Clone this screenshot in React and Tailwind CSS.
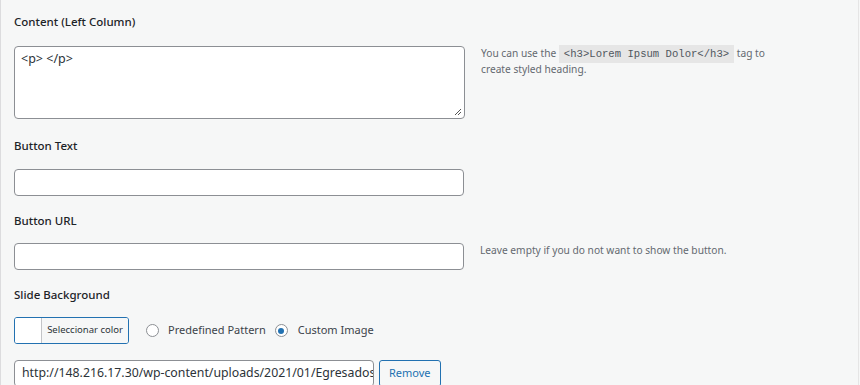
const labelClass = "text-[11.5px] font-medium text-[#1d2327] leading-[14px]";
const inputClass = "block w-[450px] h-[27px] bg-white border border-[#8c8f94] rounded-[4px]";

const Radio = ({checked}) => (
    <span className="w-[13px] h-[13px] rounded-full border border-[#8c8f94] bg-white flex items-center justify-center shrink-0">
        {checked && <span className="w-[6px] h-[6px] rounded-full bg-[#2271b1]" />}
    </span>
);

const App = () =>
{
    return (
        <div className="w-[860px] h-[385px] overflow-hidden bg-[#f6f7f7] border-l border-[#dcdcde] flex" style={{fontFamily: "'Noto Sans', sans-serif"}}>
            <div className="flex-1 pl-[13px] pt-[15px]">
                <div className={labelClass}>Content (Left Column)</div>

                <div className="flex mt-[17px]">
                    <div className="w-[451px] h-[73px] bg-white border border-[#8c8f94] rounded-[4px] px-[6px] pt-[3px] text-[12.5px] text-[#2c3338] relative">
                        &lt;p&gt; &lt;/p&gt;
                        <svg className="absolute right-[2px] bottom-[2px]" width="8" height="8" viewBox="0 0 8 8">
                            <path d="M7 1 L1 7 M7 4 L4 7" stroke="#555" strokeWidth="1" />
                        </svg>
                    </div>
                    <div className="ml-[16px] text-[10.2px] text-[#646970] leading-[15px]">
                        <div>
                            You can use the{" "}
                            <code className="bg-[#e6e6e6] px-[5px] py-[3px] text-[10.6px] text-[#50575e]" style={{fontFamily: "'Liberation Mono', monospace"}}>&lt;h3&gt;Lorem Ipsum Dolor&lt;/h3&gt;</code>{" "}
                            tag to
                        </div>
                        <div>create styled heading.</div>
                    </div>
                </div>

                <div className={`${labelClass} mt-[20px]`}>Button Text</div>
                <input className={`${inputClass} mt-[16px]`} />

                <div className={`${labelClass} mt-[18px]`}>Button URL</div>
                <div className="flex items-start mt-[15px]">
                    <input className={inputClass} />
                    <span className="ml-[16px] mt-[0px] leading-[15px] text-[10.2px] text-[#646970]">Leave empty if you do not want to show the button.</span>
                </div>

                <div className={`${labelClass} mt-[18px]`}>Slide Background</div>
                <div className="flex items-center mt-[15px] h-[27px]">
                    <div className="flex h-[27px] w-[115px] border border-[#2271b1] rounded-[3px] overflow-hidden">
                        <span className="w-[27px] bg-white border-r border-[#c3c4c7]" />
                        <span className="flex-1 bg-[#f6f7f7] text-[9.5px] text-[#2c3338] flex items-center justify-center">Seleccionar color</span>
                    </div>
                    <div className="flex items-center ml-[17px] text-[11px] text-[#3c434a]">
                        <Radio />
                        <span className="ml-[9px]">Predefined Pattern</span>
                        <span className="ml-[9px]"><Radio checked /></span>
                        <span className="ml-[10px]">Custom Image</span>
                    </div>
                </div>

                <div className="flex mt-[16px] gap-[5px]">
                    <div className="w-[360px] h-[27px] bg-white border border-[#8c8f94] rounded-[4px] px-[7px] text-[12.3px] text-[#2c3338] flex items-center overflow-hidden whitespace-nowrap">
                        http://148.216.17.30/wp-content/uploads/2021/01/Egresados-
                    </div>
                    <button className="h-[27px] px-[9px] border border-[#2271b1] rounded-[3px] bg-[#f6f7f7] text-[#2271b1] text-[11px]">Remove</button>
                </div>
            </div>
            <div className="w-[2px] border-l border-[#e5e5e5]" />
        </div>
    );
};

export default App;
